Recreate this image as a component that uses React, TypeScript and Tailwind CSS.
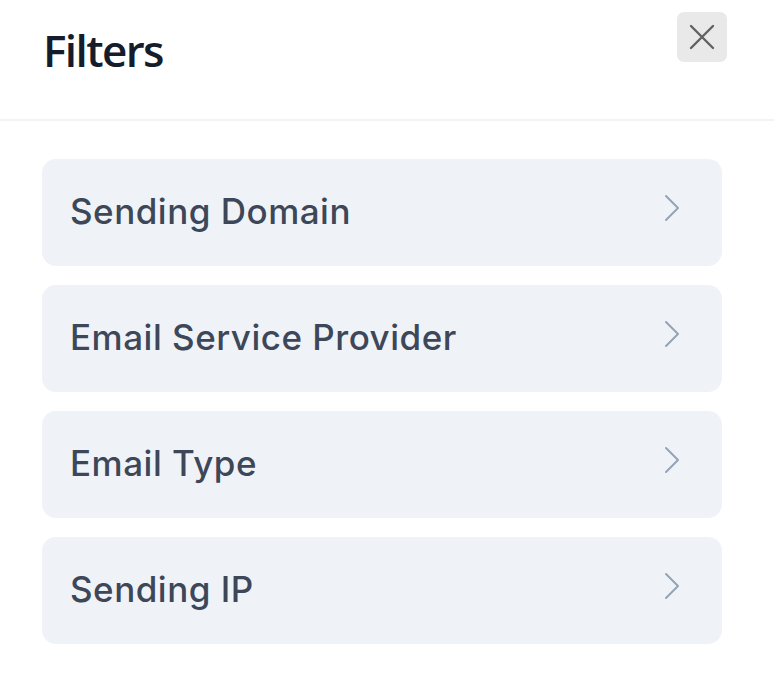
import React from "react";

const items = ["Sending Domain", "Email Service Provider", "Email Type", "Sending IP"];

function Chevron() {
  return (
    <svg width="18" height="28" viewBox="0 0 18 28" fill="none" className="shrink-0 mb-[9px]">
      <path d="M3 2 L15 14 L3 26" stroke="#94a3b8" strokeWidth="2" strokeLinecap="round" strokeLinejoin="round" />
    </svg>
  );
}

export default function App() {
  return (
    <div className="w-[774px] h-[693px] bg-white" style={{ fontFamily: "Inter, 'Noto Sans', sans-serif" }}>
      <div className="flex items-start justify-between pl-[43px] pr-[47px] pt-[12px] h-[121px] border-b-2 border-[#f1f3f6]">
        <h1
          className="mt-[16px] text-[44px] leading-[44px] font-semibold text-[#151c2b] tracking-[-1.6px]"
          style={{ fontFamily: "'Open Sans', sans-serif" }}
        >
          Filters
        </h1>
        <button className="w-[50px] h-[50px] rounded-[7px] bg-[#e9e9e9] flex items-center justify-center">
          <svg width="28" height="28" viewBox="0 0 28 28" fill="none">
            <path d="M3 3 L25 25 M25 3 L3 25" stroke="#616161" strokeWidth="2.4" strokeLinecap="round" />
          </svg>
        </button>
      </div>
      <div className="flex flex-col gap-[19px] px-[42px] pt-[38px] pr-[52px]">
        {items.map((t) => (
          <div
            key={t}
            className="h-[107px] rounded-[14px] bg-[#eff3f8] flex items-center justify-between pl-[28px] pr-[41px]"
          >
            <span className="text-[35px] font-medium tracking-[0.5px] text-[#3d4758] mb-[3px]">{t}</span>
            <Chevron />
          </div>
        ))}
      </div>
    </div>
  );
}
